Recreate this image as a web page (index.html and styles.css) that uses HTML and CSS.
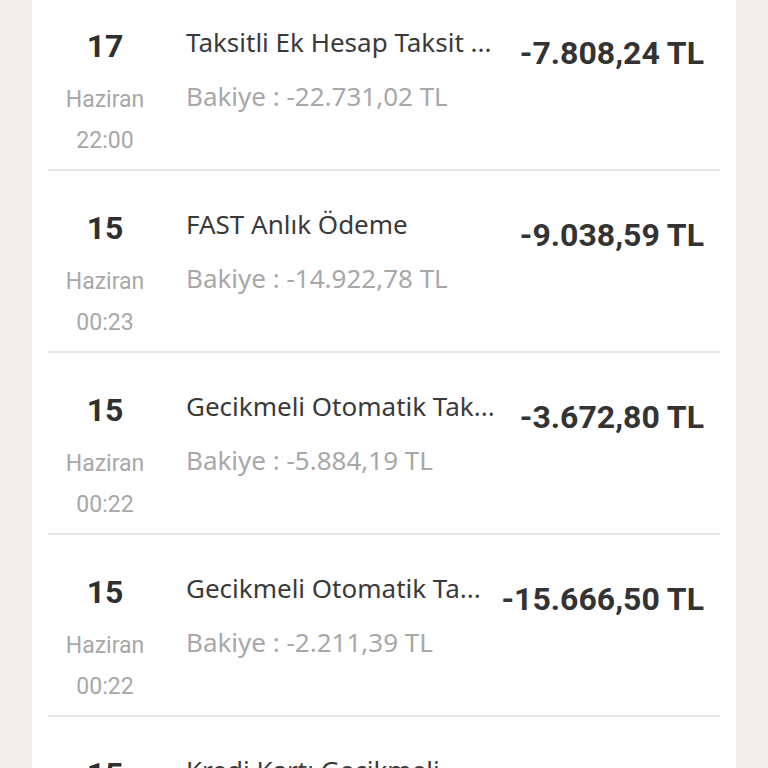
FILE: index.html
```html
<!DOCTYPE html>
<html>
<head>
	<meta charset="utf-8">
	<meta name="viewport" content="width=device-width, initial-scale=1.0">
	<title>Hesap Hareketleri</title>
	<link rel="stylesheet" href="styles.css">
</head>

<body>
	<section class="card">
		<ul class="moves">
			<li class="move">
				<div class="date">
					<span class="day">17</span>
					<span class="month">Haziran</span>
					<span class="time">22:00</span>
				</div>
				<div class="info">
					<p class="title">Taksitli Ek Hesap Taksit ...</p>
					<p class="balance">Bakiye : -22.731,02 TL</p>
				</div>
				<div class="amount">-7.808,24 TL</div>
			</li>
			<li class="move">
				<div class="date">
					<span class="day">15</span>
					<span class="month">Haziran</span>
					<span class="time">00:23</span>
				</div>
				<div class="info">
					<p class="title">FAST Anlık Ödeme</p>
					<p class="balance">Bakiye : -14.922,78 TL</p>
				</div>
				<div class="amount">-9.038,59 TL</div>
			</li>
			<li class="move">
				<div class="date">
					<span class="day">15</span>
					<span class="month">Haziran</span>
					<span class="time">00:22</span>
				</div>
				<div class="info">
					<p class="title">Gecikmeli Otomatik Tak...</p>
					<p class="balance">Bakiye : -5.884,19 TL</p>
				</div>
				<div class="amount">-3.672,80 TL</div>
			</li>
			<li class="move">
				<div class="date">
					<span class="day">15</span>
					<span class="month">Haziran</span>
					<span class="time">00:22</span>
				</div>
				<div class="info">
					<p class="title">Gecikmeli Otomatik Ta...</p>
					<p class="balance">Bakiye : -2.211,39 TL</p>
				</div>
				<div class="amount">-15.666,50 TL</div>
			</li>
			<li class="move">
				<div class="date">
					<span class="day">15</span>
				</div>
				<div class="info">
					<p class="title">Kredi Kartı Gecikmeli</p>
				</div>
			</li>
		</ul>
	</section>
</body>
</html>
```

FILE: styles.css
```css
html, body { height: 100%; overflow: hidden; }
body {
	margin: 0; background-color: #f0efed; font-family: 'Roboto', sans-serif;
}
.card { background: #fff; margin: 0 32px; min-height: 100%; }
.moves { list-style: none; margin: -11px 0 0; padding: 0 16px; }

/* one row = 182px incl. the divider */
.move {
	display: flex; align-items: flex-start; box-sizing: border-box; height: 182px;
	padding: 24px 16px 0 0; border-bottom: 2px solid #e6e6e6;
}

.date { display: flex; flex-direction: column; width: 114px; flex: none; text-align: center; }
.day { font-weight: 700; font-size: 32px; line-height: 66px; color: #2f2f2f; }
.month, .time { font-size: 23px; line-height: 41px; color: #a8a8a8; }

.info { flex: 1; min-width: 0; margin-left: 24px; padding-top: 4px; font-family: 'Noto Sans', sans-serif; font-size: 26px; }
.info p { margin: 0; line-height: 50px; white-space: nowrap; }
.title { color: #3a3a3a; }
.balance { color: #a8a8a8; margin-top: 4px !important; }

.amount { flex: none; margin-left: 14px; padding-top: 24px; font-weight: 700; font-size: 32px; line-height: 33px; color: #333; }
```
